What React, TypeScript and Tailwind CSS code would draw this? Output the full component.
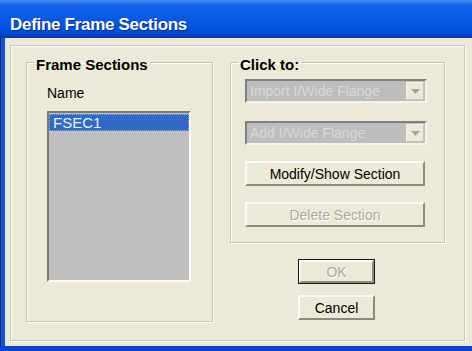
const sans = "font-['Liberation_Sans','Arial',sans-serif]";

const Combo = ({ label }: { label: string }) => (
  <div className="flex h-[24px] w-[182px] border-2 border-t-[#808080] border-l-[#808080] border-b-[#f4f3ee] border-r-[#f4f3ee] bg-[#bdbdbd]">
    <div className="flex-1 pl-[3px] text-[14px] leading-[20px] text-[#d9d9d9]">{label}</div>
    <div className="m-[1px] flex w-[18px] items-center justify-center border border-[#f4f3ee] border-r-[#c8c5b5] border-b-[#c8c5b5] bg-[#ece9d8]">
      <svg width="9" height="5" viewBox="0 0 9 5">
        <path d="M0 0h9L4.5 5z" fill="#a7a596" />
      </svg>
    </div>
  </div>
);

const Button = ({
  label,
  disabled,
  isDefault,
  w,
}: {
  label: string;
  disabled?: boolean;
  isDefault?: boolean;
  w: string;
}) => (
  <div className={`${w} h-[25px] ${isDefault ? "border border-[#1a1a1a]" : ""}`}>
    <div className="flex h-full items-center justify-center border-2 border-t-[#fbfaf6] border-l-[#fbfaf6] border-b-[#8d8a7c] border-r-[#8d8a7c] bg-[#ece9d8]">
      <span
        className={`text-[14px] leading-none ${
          disabled ? "text-[#aca899] [text-shadow:1px_1px_0_#ffffff]" : "text-black"
        }`}
      >
        {label}
      </span>
    </div>
  </div>
);

export default function App() {
  return (
    <div className={`flex h-[351px] w-[472px] flex-col overflow-hidden bg-[#0a4fd8] ${sans}`}>
      {/* title bar */}
      <div className="flex h-[38px] items-center bg-[linear-gradient(to_bottom,#4a90f5_0%,#1466ec_12%,#0a5ae6_45%,#0052e0_75%,#0044cc_92%,#003ab0_100%)] pl-[10px] pt-[12px]">
        <span className="text-[17px] font-bold tracking-[-0.3px] text-white [text-shadow:1px_1px_0_#0a2a8a]">
          Define Frame Sections
        </span>
      </div>

      <div className="flex flex-1">
        {/* left window border */}
        <div className="flex w-[5px]">
          <div className="w-[1px] bg-[#0d1a60]" />
          <div className="flex-1 bg-[#0a55e0]" />
        </div>

        <div className="flex-1 bg-[#ece9d8] pl-[5px] pt-[7px]">
          {/* etched frame */}
          <div className="flex h-[296px] w-[455px] border border-[#c9c6b6] pl-[15px] pt-[6px] shadow-[inset_1px_1px_0_#fdfdfb,1px_1px_0_#fdfdfb]">
            <fieldset className="h-[270px] w-[187px] border border-[#c5c2b2] shadow-[inset_1px_1px_0_#fdfdfb,1px_1px_0_#fdfdfb]">
              <legend className="ml-[7px] px-[2px] pt-[4px] text-[15px] font-bold leading-[17px] text-black">
                Frame Sections
              </legend>
              <div className="pl-[20px]">
                <div className="mt-[12px] text-[14px] leading-[16px] text-black">Name</div>
                <div className="mt-[10px] h-[171px] w-[144px] border-2 border-t-[#7d7b70] border-l-[#7d7b70] border-b-[#fbfaf6] border-r-[#fbfaf6] bg-[#bfbfbf] pt-[1px]">
                  <div className="h-[17px] border border-dotted border-[#8fb0e8] bg-[#3169c6] pl-[3px] text-[15px] leading-[15px] text-[#eaf4ff]">
                    FSEC1
                  </div>
                </div>
              </div>
            </fieldset>

            <div className="ml-[17px] flex flex-col">
              <fieldset className="h-[191px] w-[215px] border border-[#c5c2b2] shadow-[inset_1px_1px_0_#fdfdfb,1px_1px_0_#fdfdfb]">
                <legend className="ml-[7px] px-[2px] pt-[4px] text-[15px] font-bold leading-[17px] text-black">
                  Click to:
                </legend>
                <div className="mt-[6px] flex flex-col pl-[14px]">
                  <Combo label="Import I/Wide Flange" />
                  <div className="mt-[18px]">
                    <Combo label="Add I/Wide Flange" />
                  </div>
                  <div className="mt-[16px]">
                    <Button w="w-[180px]" label="Modify/Show Section" />
                  </div>
                  <div className="mt-[16px]">
                    <Button w="w-[180px]" label="Delete Section" disabled />
                  </div>
                </div>
              </fieldset>
              <div className="mt-[16px] flex flex-col gap-[11px] pl-[68px]">
                <Button w="w-[77px]" label="OK" disabled isDefault />
                <Button w="w-[77px]" label="Cancel" />
              </div>
            </div>
          </div>
        </div>
      </div>
      {/* bottom border */}
      <div className="h-[5px] bg-[#0846cf]" />
    </div>
  );
}
